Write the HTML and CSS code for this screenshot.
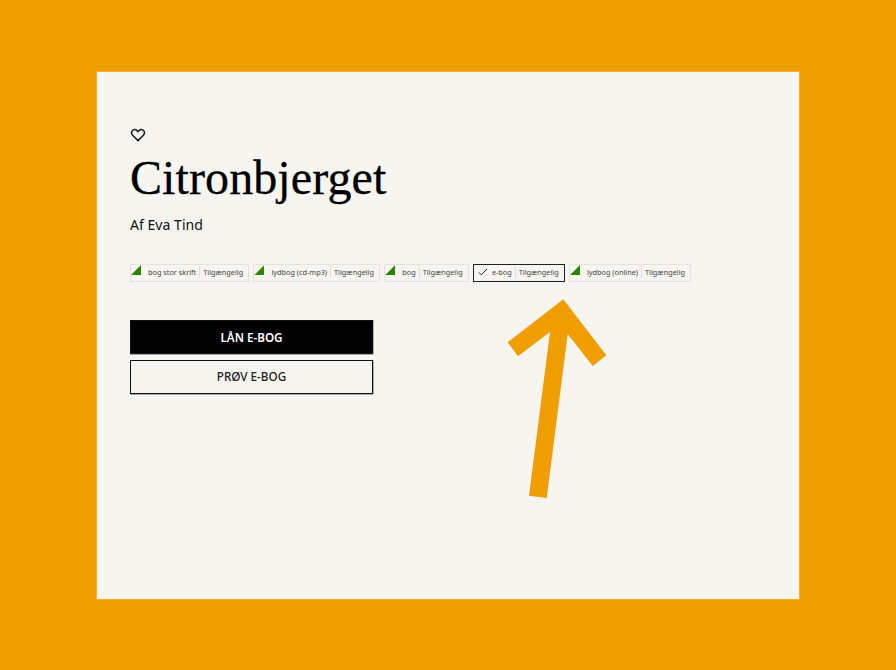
FILE: index.html
```html
<!DOCTYPE html>
<html lang="da">
<head>
<meta charset="utf-8">
<title>Citronbjerget</title>
<link rel="stylesheet" href="styles.css">
</head>
<body>
<main class="panel">
  <svg class="heart" width="16" height="16" viewBox="0 0 16 16" aria-hidden="true"><path d="M8 13.6 2.6 8.2C1.2 6.8 1.2 4.7 2.5 3.5 3.8 2.3 5.8 2.4 7 3.6L8 4.7 9 3.6C10.2 2.4 12.2 2.3 13.5 3.5 14.8 4.7 14.8 6.8 13.4 8.2Z" fill="none" stroke="#222" stroke-width="1.6" stroke-linejoin="round"/></svg>
  <h1 class="title">Citronbjerget</h1>
  <p class="author">Af Eva Tind</p>
  <ul class="formats">
    <li class="format"><span class="corner"></span><span class="name">bog stor skrift</span><span class="status">Tilgængelig</span></li>
    <li class="format"><span class="corner"></span><span class="name">lydbog (cd-mp3)</span><span class="status">Tilgængelig</span></li>
    <li class="format"><span class="corner"></span><span class="name">bog</span><span class="status">Tilgængelig</span></li>
    <li class="format format-selected"><svg class="check" width="10" height="8" viewBox="0 0 10 8" aria-hidden="true"><path d="M.8 4.4 3.2 6.9 9.2 .8" fill="none" stroke="#333" stroke-width="1"/></svg><span class="name">e-bog</span><span class="status">Tilgængelig</span></li>
    <li class="format"><span class="corner"></span><span class="name">lydbog (online)</span><span class="status">Tilgængelig</span></li>
  </ul>
  <div class="actions">
    <button class="btn btn-primary">LÅN E-BOG</button>
    <button class="btn btn-secondary">PRØV E-BOG</button>
  </div>
  <svg class="arrow" width="100" height="200" viewBox="507 299 100 200" aria-hidden="true"><polygon points="563.3,299.3 606.3,355.3 592.7,366 567.7,334 546.7,498 529,495.7 550,332 518,356.3 507.7,342.3" fill="#f09d00"/></svg>
</main>
</body>
</html>
```
FILE: styles.css
```css
* { box-sizing: border-box; }
html, body { margin: 0; height: 670px; }
body {
  background: #f09d00;
  padding: 72px 97px 71px;
  font-family: "Noto Sans", sans-serif;
  overflow: hidden;
}
.panel {
  position: relative;
  height: 527px;
  background: #f6f5f0;
  box-shadow: 0 0 0 1px rgba(246, 245, 240, .2);
  padding: 55px 33px 0;
  display: flex;
  flex-direction: column;
  align-items: flex-start;
}
.heart { display: block; }
.title {
  margin: 10px 0 0;
  font-family: "Liberation Serif", serif;
  font-weight: 400;
  font-size: 48px;
  line-height: 50px;
  letter-spacing: .1px;
  -webkit-text-stroke: .3px #000;
  color: #000;
}
.author {
  margin: 12px 0 0;
  font-size: 14.1px;
  line-height: 20px;
  color: #111;
}
.formats {
  list-style: none;
  margin: 29px 0 0;
  padding: 0;
  display: flex;
  gap: 4.25px;
}
.format {
  position: relative;
  height: 18px;
  border: 1px solid #e4e3df;
  padding: 0 5px 2px 17px;
  display: flex;
  align-items: center;
  font-size: 7.3px;
  color: #444;
  white-space: nowrap;
}
.format-selected { border-color: #222; padding-left: 4px; }
.corner {
  position: absolute;
  left: 0;
  top: 0;
  width: 10px;
  height: 10px;
  background: #2b8500;
  clip-path: polygon(100% 0, 100% 100%, 0 100%);
}
.check { margin-right: 4px; }
.name { padding-right: 3px; border-right: 1px solid #ddd; line-height: 12px; }
.status { padding-left: 3px; }
.actions {
  margin-top: 38px;
  width: 243px;
  display: flex;
  flex-direction: column;
  gap: 6px;
}
.btn {
  display: block;
  width: 100%;
  height: 34px;
  font-family: "Noto Sans", sans-serif;
  font-size: 11.7px;
  font-weight: 600;
  border: 1px solid #111;
  box-shadow: 1px 0 0 rgba(0, 0, 0, .3), 0 1px 0 rgba(0, 0, 0, .3);
  padding: 0;
}
.btn-primary { background: #000; color: #fff; }
.btn-secondary { background: #f6f5f0; color: #222; font-weight: 500; padding-bottom: 2px; }
.arrow { position: absolute; left: 410px; top: 227px; }
```
